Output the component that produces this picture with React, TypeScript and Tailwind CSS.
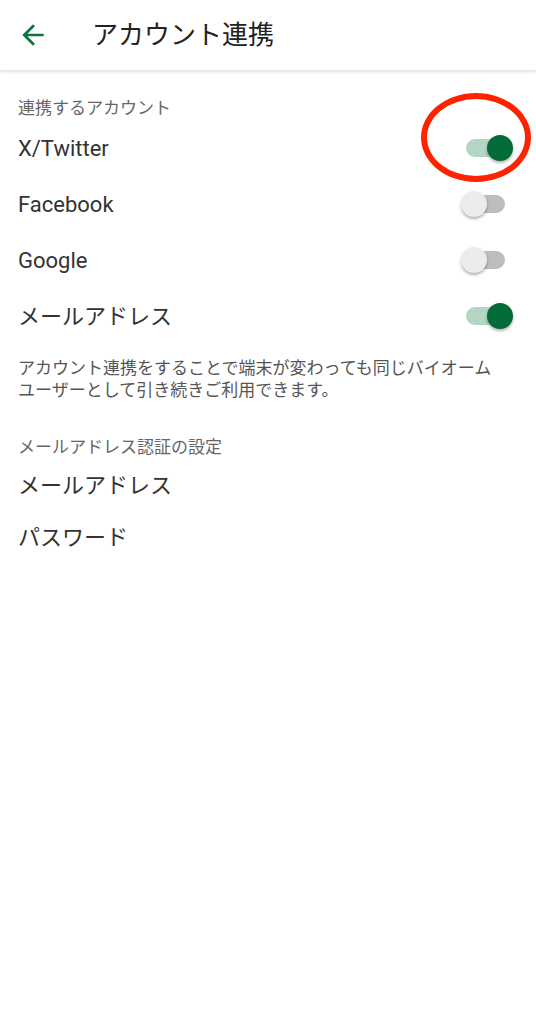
import React, { useState } from "react";

const font = { fontFamily: 'Roboto, "Noto Sans CJK JP", "Noto Sans", sans-serif' };

function Toggle({ on, onClick }: { on: boolean; onClick: () => void }) {
  return (
    <button onClick={onClick} className="relative w-[52px] h-[28px] shrink-0">
      <span
        className={
          "absolute left-[5px] right-[8px] top-[5px] h-[18px] rounded-full " +
          (on ? "bg-[#b4d6c3]" : "bg-[#bdbdbd]")
        }
      />
      <span
        className={
          "absolute top-[1px] w-[26px] h-[26px] rounded-full shadow-[0_2px_3px_rgba(0,0,0,0.3)] " +
          (on ? "left-[26px] bg-[#026b38]" : "left-0 bg-[#ececec]")
        }
      />
    </button>
  );
}

function SwitchRow({ label, on, onClick }: { label: string; on: boolean; onClick: () => void }) {
  return (
    <div className="flex items-center justify-between h-[56px] pl-[18px] pr-[23px]">
      <span className="text-[22px] text-[#333]">{label}</span>
      <Toggle on={on} onClick={onClick} />
    </div>
  );
}

export default function App() {
  const [links, setLinks] = useState({ twitter: true, facebook: false, google: false, mail: true });
  const flip = (k: keyof typeof links) => setLinks((s) => ({ ...s, [k]: !s[k] }));

  return (
    <div className="w-[536px] min-h-[1024px] bg-white" style={font}>
      <header className="h-[70px] flex items-center bg-white shadow-[0_2px_3px_rgba(0,0,0,0.12)] relative z-10">
        <button className="w-[76px] h-[70px] flex items-center pl-[17px]">
          <svg width="32" height="32" viewBox="0 0 24 24" fill="#0a7440">
            <path d="M20 11H7.83l5.59-5.59L12 4l-8 8 8 8 1.41-1.41L7.83 13H20v-2z" />
          </svg>
        </button>
        <h1 className="ml-[16px] text-[26px] text-[#222] leading-none">アカウント連携</h1>
      </header>

      <div className="pt-[26px]">
        <div className="px-[18px] text-[17px] text-[#666] h-[24px] leading-[24px]">連携するアカウント</div>
        <div className="relative">
          <SwitchRow label="X/Twitter" on={links.twitter} onClick={() => flip("twitter")} />
          {/* red annotation */}
          <div className="absolute left-[421px] top-[-27px] w-[110px] h-[89px] rounded-[50%] border-[6px] border-[#ff2200] pointer-events-none" />
        </div>
        <SwitchRow label="Facebook" on={links.facebook} onClick={() => flip("facebook")} />
        <SwitchRow label="Google" on={links.google} onClick={() => flip("google")} />
        <SwitchRow label="メールアドレス" on={links.mail} onClick={() => flip("mail")} />

        <p className="px-[18px] mt-[13px] text-[17px] leading-[22px] text-[#555]">
          アカウント連携をすることで端末が変わっても同じバイオーム
          <br />
          ユーザーとして引き続きご利用できます。
        </p>

        <div className="px-[18px] mt-[34px] text-[17px] text-[#666] h-[24px] leading-[24px]">
          メールアドレス認証の設定
        </div>
        <div className="px-[18px] h-[52px] flex items-center text-[22px] text-[#333]">メールアドレス</div>
        <div className="px-[18px] h-[52px] flex items-center text-[22px] text-[#333]">パスワード</div>
      </div>
    </div>
  );
}
